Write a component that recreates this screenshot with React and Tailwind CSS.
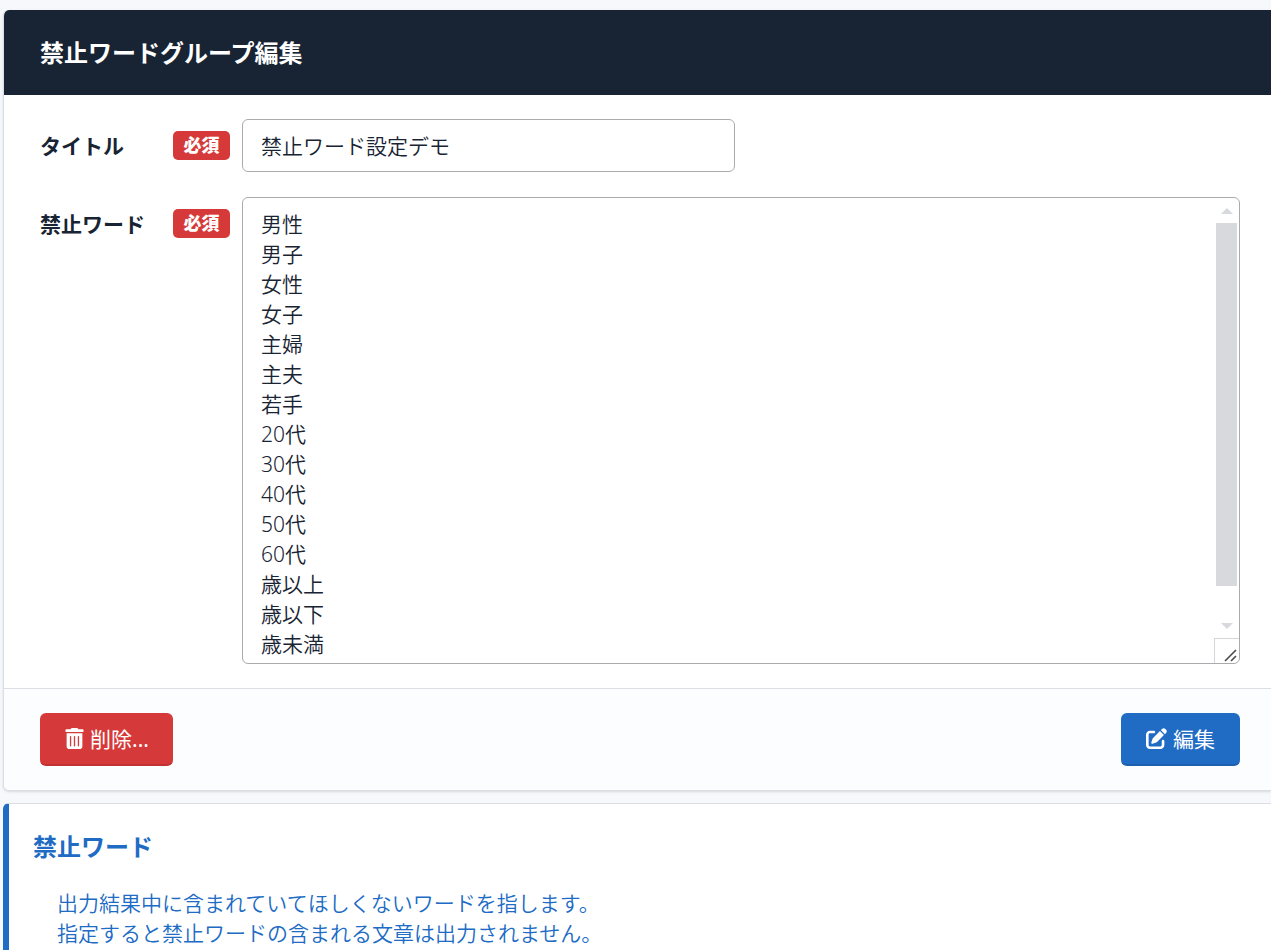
import React from 'react';
import { FaPenToSquare, FaTrashCan } from 'react-icons/fa6';

const WORDS = [
  '男性',
  '男子',
  '女性',
  '女子',
  '主婦',
  '主夫',
  '若手',
  '20代',
  '30代',
  '40代',
  '50代',
  '60代',
  '歳以上',
  '歳以下',
  '歳未満',
];

const FieldLabel = ({ htmlFor, children }) => (
  <label
    htmlFor={htmlFor}
    className="flex w-[190px] shrink-0 items-start justify-between pt-3 font-bold leading-[31px]"
  >
    {children}
    <span className="min-w-[57px] rounded-[5px] bg-[#d63939] text-center text-[18px] leading-[29px] font-black text-white">
      必須
    </span>
  </label>
);

// Scroll track and resize grip on the right edge of the word list
const ScrollTrack = () => (
  <div className="pointer-events-none absolute inset-y-px right-px flex w-[25px] flex-col" aria-hidden="true">
    <div className="flex h-[25px] items-center justify-center">
      <svg width="12" height="6" viewBox="0 0 12 6" fill="#d8d9dd">
        <path d="M6 0L12 6H0z" />
      </svg>
    </div>
    <div className="flex-1 px-[2px]">
      <div className="h-[93%] bg-[#d8d9dd]" />
    </div>
    <div className="flex h-[25px] items-center justify-center">
      <svg width="12" height="6" viewBox="0 0 12 6" fill="#d8d9dd">
        <path d="M0 0H12L6 6z" />
      </svg>
    </div>
    <div className="flex h-[25px] items-end justify-end border-t border-l border-[#d4d6da] px-[2px] pb-px">
      <svg width="13" height="13" viewBox="0 0 13 13" fill="none" stroke="#4b4b4b" strokeWidth="1.6">
        <path d="M1 12L12 1M7 12L12 7" />
      </svg>
    </div>
  </div>
);

const App = () => {
  return (
    <div className="flex min-h-screen flex-col gap-3 bg-[#f6f8fb] pt-[10px] pl-[3px] font-['Noto_Sans','Noto_Sans_CJK_JP',sans-serif] text-[21px] leading-[30px] text-[#182433]">
      {/* Group edit form */}
      <form
        className="overflow-hidden rounded-l-[6px] border-b border-l border-[#dadfe5] bg-white shadow-sm"
        onSubmit={(e) => e.preventDefault()}
      >
        <div className="bg-[#182433] py-[27px] pl-9">
          <h1 className="text-[24px] leading-[31px] font-bold text-white">禁止ワードグループ編集</h1>
        </div>

        <div className="flex flex-col gap-[25px] py-6 pr-[31px] pl-9">
          <div className="flex items-start gap-3">
            <FieldLabel htmlFor="title">タイトル</FieldLabel>
            <input
              id="title"
              type="text"
              defaultValue="禁止ワード設定デモ"
              className="h-[53px] w-full max-w-[493px] rounded-[6px] border border-[#a9abae] bg-white px-[18px] pb-[2px] font-[350] outline-none"
            />
          </div>

          <div className="flex items-start gap-3">
            <FieldLabel htmlFor="words">禁止ワード</FieldLabel>
            <div className="relative flex flex-1">
              <textarea
                id="words"
                defaultValue={WORDS.join('\n')}
                className="h-[467px] w-full resize-none overflow-hidden rounded-[6px] border border-[#a9abae] bg-white px-[18px] pt-[11px] leading-[30px] font-[350] outline-none"
              />
              <ScrollTrack />
            </div>
          </div>
        </div>

        <div className="flex items-center justify-between border-t border-[#dadfe5] bg-[#fcfdfe] py-6 pr-[31px] pl-9">
          <button
            type="button"
            className="flex h-[53px] items-center gap-[5px] rounded-[6px] border-b-2 border-[#c13333] bg-[#d63939] px-6 text-white"
          >
            <FaTrashCan className="h-[21px] w-auto" />
            削除...
          </button>
          <button
            type="submit"
            className="flex h-[53px] items-center gap-[6px] rounded-[6px] border-b-2 border-[#1d60b0] bg-[#206bc4] px-[25px] text-white"
          >
            <FaPenToSquare className="h-[21px] w-auto" />
            編集
          </button>
        </div>
      </form>

      {/* Help text */}
      <section className="flex-1 rounded-tl-[6px] border-t border-l-[6px] border-t-[#dadfe5] border-l-[#206bc4] bg-white pt-[27px] pl-6 text-[#206bc4]">
        <h2 className="text-[24px] leading-[31px] font-bold">禁止ワード</h2>
        <p className="pt-[26px] pl-6 font-[350]">
          出力結果中に含まれていてほしくないワードを指します。
          <br />
          指定すると禁止ワードの含まれる文章は出力されません。
        </p>
      </section>
    </div>
  );
};

export default App;
